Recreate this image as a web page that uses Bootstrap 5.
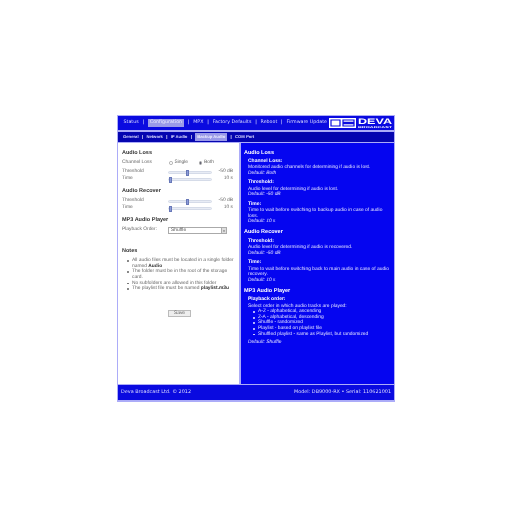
<!DOCTYPE html>
<html><head><meta charset="utf-8">
<link href="https://cdn.jsdelivr.net/npm/bootstrap@5.3.0/dist/css/bootstrap.min.css" rel="stylesheet">
<style>
html,body{background:#fff;}
body{font-family:"Liberation Sans",Arial,sans-serif;font-size:4.9px;line-height:5.6px;color:#666;padding:115px 0 0 117px;text-rendering:geometricPrecision;}
.shell{width:278px;height:287px;background:#acacf8;padding:1px;filter:blur(.35px);}
.bar{background:#0a0ae0;color:#dcdcff;font-family:"DejaVu Sans",sans-serif;white-space:nowrap;}
.top1{height:14px;font-size:4.750px;padding-left:5.500px;margin-bottom:2px;}
.top2{height:10px;font-family:"Liberation Sans",sans-serif;font-size:4.200px;font-weight:700;padding-left:5px;background:#0505b0;margin-bottom:1px;}
.sep{margin:0 3.800px;color:#fff;}
.top2 .sep{margin:0 3.300px;}
.act{background:#9a9ae8;color:#eef;padding:1px 2px;}
.logo{margin-left:auto;margin-right:1px;flex:none;}
.mid{height:241px;gap:2px;}
.pl{width:121px;background:#fff;padding:6.500px 4px 0 4px;}
.pr{flex:1;background:#0505f0;color:#e4e4ff;padding:6.500px 5px 0 3px;}
.h1a{font-size:5.500px;line-height:7px;font-weight:700;color:#333;margin:0;}
.pr .h1a{color:#fff;}
.g2{margin-top:2px}.g3{margin-top:3px}.g5{margin-top:5px}.g14{margin-top:14px}
.rw{height:7px;}
.lb{width:46px;flex:none;}
.trk{width:44px;height:3px;background:#e8ecf5;border:.5px solid #d5dbe8;border-radius:2px;position:relative;}
.thumb{position:absolute;top:-2px;width:3px;height:6px;background:#8c9cd8;border:.5px solid #6878b8;}
.val{width:21px;text-align:right;}
.dot{width:3.500px;height:3.500px;border-radius:50%;border:.5px solid #aaa;display:inline-block;margin:0 2px 0 1px;}
.dot.on{background:#667;}
.rad{width:23px;}
.sel{width:59px;height:7px;border:.5px solid #aaa;padding-left:2px;color:#555;line-height:6px;}
.arw{margin-left:auto;width:5px;height:100%;border-left:.5px solid #aaa;background:#ddd;color:#333;font-size:3px;text-align:center;line-height:6px;}
.nt,.lst{list-style:none;margin:0;padding-left:10px;}
.nt{margin-top:3.700px;}
.nt li,.lst li{position:relative;}
.nt li::before,.lst li::before{content:"";position:absolute;left:-5px;top:2px;width:1.800px;height:1.800px;border-radius:50%;background:currentColor;}
.nt b{color:#333;}
.svwrap{margin-top:18px;padding-left:2px;}
.svb{width:23px;height:7px;border:.5px solid #bbb;background:#eee;line-height:6px;text-align:center;color:#666;}
.sub{font-size:5px;font-weight:700;color:#fff;margin:1.500px 0 1.200px 4px;line-height:6px;}
.tx{margin:0 0 3.100px 4px;}
.tx i{display:block;}
.tx.end{margin-bottom:4.500px;}
.dft{margin-top:3px;}
.foot{height:15px;font-size:4.900px;padding:0 3px;margin-top:1px;}
</style></head><body>
<div class="shell">
 <div class="bar top1 d-flex align-items-center">
  <span>Status</span><span class="sep">|</span><span class="act">Configuration</span><span class="sep">|</span><span>MPX</span><span class="sep">|</span><span>Factory Defaults</span><span class="sep">|</span><span>Reboot</span><span class="sep">|</span><span>Firmware Update</span>
  <svg class="logo" width="64" height="10" viewBox="0 0 64 10">
   <rect x="0" y="0" width="27" height="10" fill="#fff"/>
   <path d="M2 2H11V8H2ZM14 2H25V4.400H14ZM14 5.600H25V8H14Z" fill="none" stroke="#0a0ae0" stroke-width="1.200"/>
   <text x="29" y="6.400" font-family="Liberation Sans" font-weight="700" font-size="8" fill="#fff" textLength="34" lengthAdjust="spacingAndGlyphs">DEVA</text>
   <text x="29" y="9.700" font-family="Liberation Sans" font-weight="700" font-size="2.600" fill="#fff" textLength="34" lengthAdjust="spacingAndGlyphs">BROADCAST</text>
  </svg>
 </div>
 <div class="bar top2 d-flex align-items-center">
  <span>General</span><span class="sep">|</span><span>Network</span><span class="sep">|</span><span>IP Audio</span><span class="sep">|</span><span class="act">Backup Audio</span><span class="sep">|</span><span>COM Port</span>
 </div>
 <div class="mid d-flex">
  <div class="pl">
   <p class="h1a">Audio Loss</p>
   <div class="rw d-flex align-items-center g3"><span class="lb">Channel Loss</span><span class="dot"></span><span class="rad">Single</span><span class="dot on"></span><span>Both</span></div>
   <div class="rw d-flex align-items-center g2"><span class="lb">Threshold</span><span class="trk"><span class="thumb" style="left:17px"></span></span><span class="val">-50 dB</span></div>
   <div class="rw d-flex align-items-center"><span class="lb">Time</span><span class="trk"><span class="thumb" style="left:0"></span></span><span class="val">10 s</span></div>
   <p class="h1a g5">Audio Recover</p>
   <div class="rw d-flex align-items-center g3"><span class="lb">Threshold</span><span class="trk"><span class="thumb" style="left:17px"></span></span><span class="val">-50 dB</span></div>
   <div class="rw d-flex align-items-center"><span class="lb">Time</span><span class="trk"><span class="thumb" style="left:0"></span></span><span class="val">10 s</span></div>
   <p class="h1a g5">MP3 Audio Player</p>
   <div class="rw d-flex align-items-center g3"><span class="lb">Playback Order:</span><span class="sel d-flex">Shuffle<span class="arw">▾</span></span></div>
   <p class="h1a g14">Notes</p>
   <ul class="nt">
    <li>All audio files must be located in a single folder named <b>Audio</b></li>
    <li>The folder must be in the root of the storage card.</li>
    <li>No subfolders are allowed in this folder</li>
    <li>The playlist file must be named <b>playlist.m3u</b></li>
   </ul>
   <div class="svwrap d-flex justify-content-center"><div class="svb">Save</div></div>
  </div>
  <div class="pr">
   <p class="h1a">Audio Loss</p>
   <p class="sub">Channel Loss:</p><p class="tx">Monitored audio channels for determining if audio is lost.<i>Default: Both</i></p>
   <p class="sub">Threshold:</p><p class="tx">Audio level for determining if audio is lost.<i>Default: -50 dB</i></p>
   <p class="sub">Time:</p><p class="tx end">Time to wait before switching to backup audio in case of audio loss.<i>Default: 10 s</i></p>
   <p class="h1a">Audio Recover</p>
   <p class="sub">Threshold:</p><p class="tx">Audio level for determining if audio is recovered.<i>Default: -50 dB</i></p>
   <p class="sub">Time:</p><p class="tx end">Time to wait before switching back to main audio in case of audio recovery.<i>Default: 10 s</i></p>
   <p class="h1a">MP3 Audio Player</p>
   <p class="sub">Playback order:</p>
   <div class="tx">Select order in which audio tracks are played:
    <ul class="lst"><li>A-Z - alphabetical, ascending</li><li>Z-A - alphabetical, descending</li><li>Shuffle - randomized</li><li>Playlist - based on playlist file</li><li>Shuffled playlist - same as Playlist, but randomized</li></ul>
    <i class="dft">Default: Shuffle</i></div>
  </div>
 </div>
 <div class="bar foot d-flex align-items-center justify-content-between"><span>Deva Broadcast Ltd. © 2012</span><span>Model: DB9000-RX • Serial: 110621001</span></div>
</div>
</body></html>
